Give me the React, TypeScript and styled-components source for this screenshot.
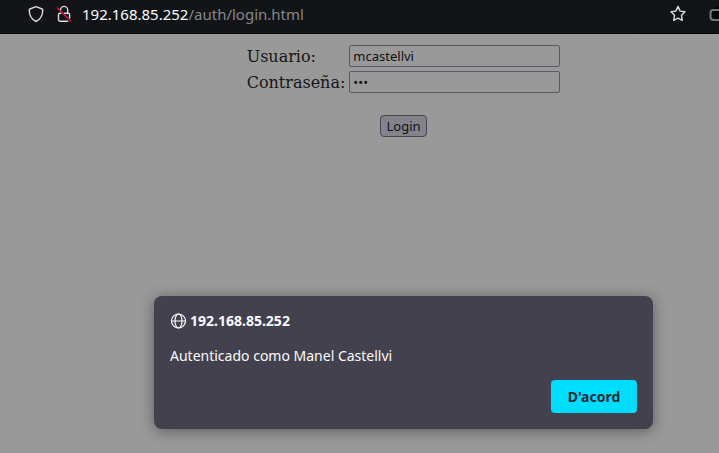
import React from "react";
import styled, { createGlobalStyle } from "styled-components";

const uiFont = `"Noto Sans", "Open Sans", sans-serif`;

const GlobalStyle = createGlobalStyle`
  *, *::before, *::after { box-sizing: border-box; }
  html, body { margin: 0; background: #99999a; }
  body { overflow: hidden; }
`;

const Browser = styled.div`
  display: flex;
  flex-direction: column;
  min-height: 100vh;
  font-family: ${uiFont};
`;

const AddressBar = styled.header`
  display: flex;
  align-items: center;
  height: 34px;
  padding: 0 0 6px 28px;
  overflow: hidden;
  border-bottom: 1px solid #070509;
  background: linear-gradient(90deg, #131418 0 88%, #101415 90%);
  color: #dcdcdf;
`;

const BarButton = styled.button<{ $gap: number }>`
  display: flex;
  flex: none;
  margin: 0 ${(p) => p.$gap}px 0 0;
  padding: 0;
  border: 0;
  background: none;
  color: inherit;
`;

const Address = styled.div`
  flex: 1;
  color: #87878a;
  font-size: 15px;
  line-height: 20px;
  white-space: nowrap;
`;

const Host = styled.span`
  color: #fbfbfe;
`;

const Viewport = styled.main`
  position: relative;
  display: flex;
  flex: 1;
  flex-direction: column;
  align-items: center;
  padding: 11px 0 0 88px;
`;

const LoginForm = styled.form`
  display: flex;
  flex-direction: column;
  align-items: center;
  gap: 22px;
`;

const Fields = styled.div`
  display: grid;
  grid-template-columns: auto 211px;
  align-items: center;
  gap: 4px;
`;

const FieldLabel = styled.label`
  padding-top: 2px;
  color: #151516;
  font: 16px/20px "DejaVu Serif", serif;
`;

const Field = styled.input`
  width: 100%;
  height: 22px;
  padding: 0 3px;
  border: 1px solid #595965;
  border-radius: 2px;
  outline: 0;
  background: #99999a;
  color: #111113;
  font: 13px/20px ${uiFont};
`;

const LoginButton = styled.button`
  height: 22px;
  padding: 0 5px;
  border: 1px solid #46454f;
  border-radius: 4px;
  background: #84838c;
  color: #111113;
  font: 13px/20px ${uiFont};
`;

const DialogLayer = styled.div`
  position: absolute;
  inset: 0;
  display: flex;
  align-items: flex-end;
  justify-content: center;
  padding: 0 66px 24px 154px;
`;

const Dialog = styled.section`
  display: flex;
  flex: 1;
  flex-direction: column;
  max-width: 600px;
  padding: 16px;
  border-radius: 8px;
  background: #42414d;
  box-shadow: 0 2px 14px rgba(20, 20, 26, 0.45);
  color: #fbfbfe;
`;

const DialogTitle = styled.h1`
  display: flex;
  align-items: center;
  gap: 4px;
  margin: 0 0 16px;
  font-size: 14px;
  font-weight: 700;
  line-height: 18px;
`;

const Message = styled.p`
  margin: 0 0 14px;
  font-size: 14px;
  line-height: 20px;
`;

const AcceptButton = styled.button`
  align-self: flex-end;
  min-width: 86px;
  height: 33px;
  padding: 0 16px;
  border: 0;
  border-radius: 4px;
  background: #00ddff;
  color: #2b2a33;
  font: 700 14px/20px ${uiFont};
`;

const Glyph = styled.svg`
  display: block;
  flex: none;
  fill: none;
  stroke: currentColor;
  stroke-linecap: round;
  stroke-linejoin: round;
`;

const ShieldIcon = () => (
  <Glyph width="16" height="18" viewBox="0 0 16 18" strokeWidth="1.4" aria-hidden>
    <path d="M8 1.7 14.2 4c.4 0 .6.4.6.8-.1 5.3-1.7 9.500-6.800 11.700C2.900 14.300 1.300 10.100 1.200 4.800c0-.4.2-.8.6-.8Z" />
  </Glyph>
);

const InsecureIcon = () => (
  <Glyph width="16" height="18" viewBox="0 0 16 18" strokeWidth="1.4" aria-hidden>
    <path d="M4.500 5.500V5a3.600 3.600 0 0 1 7.200 0v3" />
    <path d="M8.500 8.200h3.700a1.400 1.400 0 0 1 1.400 1.400v3.300M11.700 16.200H3.900a1.400 1.400 0 0 1-1.400-1.400V9.600a1.400 1.400 0 0 1 1.400-1.400h1" />
    <path d="M1.500 3 14.500 16" stroke="#e6103f" />
  </Glyph>
);

const StarIcon = () => (
  <Glyph width="16" height="18" viewBox="0 0 16 18" strokeWidth="1.4" aria-hidden>
    <path d="m8 1.400 2.100 4.700 4.900.7-3.500 3.500.8 5L8 13.100l-4.300 2.200.8-5L1 6.800l4.900-.7Z" />
  </Glyph>
);

const PocketIcon = () => (
  <Glyph width="10" height="18" viewBox="0 0 10 18" strokeWidth="2" aria-hidden>
    <circle cx="10" cy="8" r="7" fill="#050607" stroke="none" />
    <path d="M11 5H4.500a3 3 0 0 0-3 3v4a3 3 0 0 0 3 3H11" stroke="#77777a" />
  </Glyph>
);

const GlobeIcon = () => (
  <Glyph width="16" height="16" viewBox="0 0 16 16" strokeWidth="1.2" aria-hidden>
    <circle cx="8.500" cy="8" r="7" />
    <ellipse cx="8.500" cy="8" rx="3.500" ry="7" />
    <path d="M1.500 8h14" />
  </Glyph>
);

export default function App() {
  return (
    <>
      <GlobalStyle />
      <Browser>
        <AddressBar>
          <BarButton type="button" $gap={12} aria-label="Protección">
            <ShieldIcon />
          </BarButton>
          <BarButton type="button" $gap={10} aria-label="Conexión no segura">
            <InsecureIcon />
          </BarButton>
          <Address>
            <Host>192.168.85.252</Host>/auth/login.html
          </Address>
          <BarButton type="button" $gap={23} aria-label="Marcador">
            <StarIcon />
          </BarButton>
          <BarButton type="button" $gap={0} aria-label="Guardar">
            <PocketIcon />
          </BarButton>
        </AddressBar>
        <Viewport>
          <LoginForm onSubmit={(e) => e.preventDefault()}>
            <Fields>
              <FieldLabel htmlFor="user">Usuario:</FieldLabel>
              <Field id="user" type="text" defaultValue="mcastellvi" />
              <FieldLabel htmlFor="password">Contraseña:</FieldLabel>
              <Field id="password" type="password" defaultValue="abc" />
            </Fields>
            <LoginButton type="submit">Login</LoginButton>
          </LoginForm>
          <DialogLayer>
            <Dialog role="alertdialog" aria-labelledby="alert-title" aria-describedby="alert-message">
              <DialogTitle id="alert-title">
                <GlobeIcon />
                192.168.85.252
              </DialogTitle>
              <Message id="alert-message">Autenticado como Manel Castellvi</Message>
              <AcceptButton type="button">D'acord</AcceptButton>
            </Dialog>
          </DialogLayer>
        </Viewport>
      </Browser>
    </>
  );
}
